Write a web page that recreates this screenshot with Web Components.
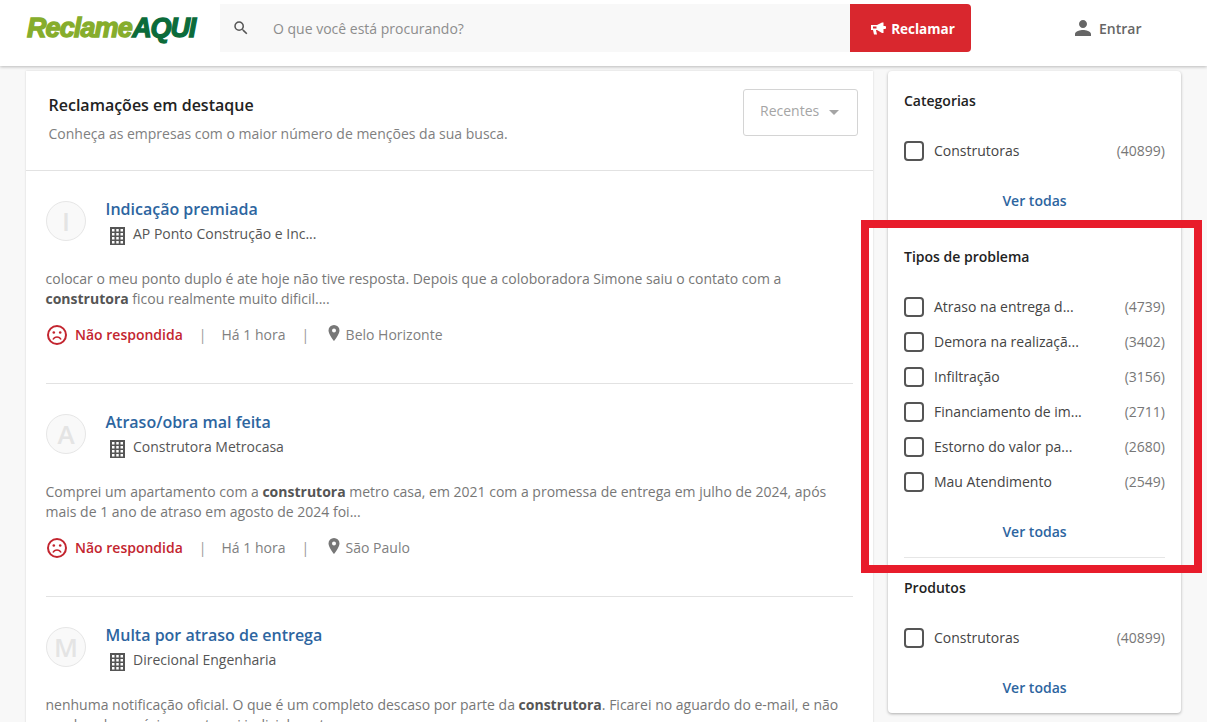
<!DOCTYPE html>
<html lang="pt-BR"><head><meta charset="utf-8"><title>Reclame AQUI</title>
<style>
html,body{margin:0;height:722px;overflow:hidden;background:#f8f8f8;font-family:"Open Sans",sans-serif;font-size:14px;color:#444}
.page{display:flex;gap:15px;padding:5px 26px 0;align-items:flex-start}
</style></head><body>
<template id="t-header"><style>
:host{display:flex;height:66px;background:#fff;box-shadow:0 1px 3px rgba(0,0,0,.25);position:relative;z-index:2;padding:0 26px;box-sizing:border-box}
.logo{width:194px;font:italic 700 27px "Liberation Sans",sans-serif;letter-spacing:-.9px;-webkit-text-stroke:1.300px currentColor;color:#86ad2c;line-height:56px;white-space:nowrap;padding-left:1px;box-sizing:border-box}
.logo b{color:#0b6b3a;font-weight:700;letter-spacing:-1.200px;margin-left:.5px}
.search{width:630px;height:48px;margin-top:4px;background:#f8f8f8;display:flex;align-items:center;box-sizing:border-box;padding-left:12px;color:#8d8d8d;font-size:14px}
.search svg{margin-right:23px}
.btn{width:121px;height:48px;margin-top:4px;background:#d9272e;border-radius:0 4px 4px 0;color:#fff;font-weight:700;font-size:13.5px;display:flex;align-items:center;justify-content:center;gap:4px;padding:2px 0 0 4px;box-sizing:border-box}
.in{margin-left:100px;display:flex;align-items:center;height:56px;gap:4px;color:#666;font-weight:600;font-size:14px}
</style>
<div class="logo">Reclame<b>AQUI</b></div>
<div class="search"><svg width="18" height="18" viewBox="0 0 24 24" fill="#555"><path d="M15.5 14h-.79l-.28-.27A6.47 6.47 0 0 0 16 9.5 6.5 6.5 0 1 0 9.5 16c1.61 0 3.09-.59 4.23-1.57l.27.28v.79l5 4.99L20.49 19l-4.99-5zm-6 0C7.01 14 5 11.99 5 9.5S7.01 5 9.5 5 14 7.01 14 9.5 11.99 14 9.5 14z"/></svg>O que você está procurando?</div>
<div class="btn"><svg width="17" height="14" viewBox="0 0 17 14" fill="#fff"><path d="M1 3h6l5-2.500h1.500V4H15a1 1 0 0 1 1 1v1a1 1 0 0 1-1 1h-1.500v4H12L7 8H6l1 4.500H4L3 8H1z"/><path d="M3 4.500h3.500v2H3z" fill="#d9272e"/></svg>Reclamar</div>
<div class="in"><svg width="24" height="24" viewBox="0 0 24 24" fill="#666"><path d="M12 12c2.210 0 4-1.790 4-4s-1.790-4-4-4-4 1.790-4 4 1.790 4 4 4zm0 2c-2.670 0-8 1.340-8 4v2h16v-2c0-2.660-5.330-4-8-4z"/></svg>Entrar</div>
</template>

<template id="t-feed"><style>
:host{display:block;width:847px;height:660px;background:#fff;box-shadow:0 0 2px rgba(0,0,0,.15);overflow:hidden;flex:none}
.top{display:flex;justify-content:space-between;height:99px;border-bottom:1px solid #e2e2e2;box-sizing:content-box;padding:0 15px 0 22.500px}
h2{margin:23px 0 0;font-size:16px;line-height:22px;font-weight:600;color:#222}
p{margin:8px 0 0;font-size:14px;line-height:20px;color:#808080}
.sel{width:115px;height:47px;margin-top:18px;box-sizing:border-box;border:1px solid #d4d4d4;border-radius:3px;display:flex;align-items:center;padding:0 0 4px 16px;gap:10px;color:#a5a5a5;font-size:14px}
.sel i{width:0;height:0;border:5px solid transparent;border-top-color:#a5a5a5;border-bottom:0;margin-top:4px}
</style>
<div class="top"><div><h2>Reclamações em destaque</h2><p>Conheça as empresas com o maior número de menções da sua busca.</p></div><div class="sel">Recentes<i></i></div></div>
<slot></slot>
</template>

<template id="t-item"><style>
:host{display:block;margin:0 20px;height:213px;box-sizing:border-box;padding-top:30px;border-bottom:1px solid #e2e2e2}
.head{display:flex;gap:19.500px;height:40px}
.av{width:38px;height:38px;border:1px solid #e6e6e6;border-radius:50%;background:#f9f9f9;display:flex;align-items:center;justify-content:center;font-size:26px;font-weight:600;color:#e4e4e4;flex:none}
.t{font-size:16px;line-height:20px;font-weight:600;color:#2d659f;margin-top:-2px}
.c{display:flex;align-items:center;gap:8px;margin:3px 0 0 4.500px;line-height:20px;font-size:14px;color:#555}
.c svg{margin-top:5px}
.d{margin:28px 0 0 -.500px;line-height:20px;font-size:14px;color:#777;height:40px}
.d ::slotted(b){color:#555}
.s{display:flex;align-items:center;margin-top:15px;height:20px;color:#808080;font-size:14px}
.sv{margin-top:2px}
.r{color:#c3252f;font-weight:600;margin-left:7px}
.sep{margin:0 15px 0 16px;color:#999}
.pin{margin:-3px 6px 0 3.500px}
</style>
<div class="head"><div class="av"><slot name="l"></slot></div><div><div class="t"><slot name="t"></slot></div>
<div class="c"><svg width="15" height="18" viewBox="0 0 15 18" fill="#555"><path fill-rule="evenodd" d="M0 0h15v18H0zM2 2v2.500h2.500V2zm4.250 0v2.500h2.500V2zM10.500 2v2.500H13V2zM2 6v2.500h2.500V6zm4.250 0v2.500h2.500V6zM10.500 6v2.500H13V6zM2 10v2.500h2.500V10zm4.250 0v2.500h2.500V10zM10.500 10v2.500H13V10zM2 14v2.500h2.500V14zm4.250 0v2.500h2.500V14zM10.500 14v2.500H13V14z"/></svg><slot name="c"></slot></div></div></div>
<div class="d"><slot></slot></div>
<div class="s"><svg class="sv" width="22" height="22" viewBox="0 0 22 22" fill="none" stroke="#c3252f" stroke-width="2"><circle cx="11" cy="11" r="9"/><path d="M7 15.500c1-2 2.500-2.500 4-2.500s3 .5 4 2.500" stroke-width="1.600"/><circle cx="7.800" cy="8.500" r="1.300" fill="#c3252f" stroke="none"/><circle cx="14.200" cy="8.500" r="1.300" fill="#c3252f" stroke="none"/></svg><span class="r">Não respondida</span><span class="sep">|</span>Há 1 hora<span class="sep">|</span><svg class="pin" width="12" height="16" viewBox="0 0 12 16" fill="#777"><path fill-rule="evenodd" d="M6 0a5.500 5.500 0 0 0-5.500 5.500C.5 9.500 6 16 6 16s5.500-6.500 5.500-10.500A5.500 5.500 0 0 0 6 0zm0 7.500a2 2 0 1 1 0-4 2 2 0 0 1 0 4z"/></svg><slot name="p"></slot></div>
</template>

<template id="t-side"><style>
:host{display:block;width:293px;height:642px;background:#fff;border-radius:4px;box-shadow:0 1px 3px rgba(0,0,0,.3);flex:none}
</style><slot></slot></template>

<template id="t-group"><style>
:host{display:block;margin:0 16px;padding:20px 0 15px;border-bottom:1px solid #e6e6e6}
:host([last]){border-bottom:0}
h3{margin:0 0 22px;font-size:14px;line-height:20px;font-weight:600;color:#222}
a{display:block;margin-top:23px;text-align:center;line-height:20px;font-size:14px;font-weight:600;color:#2d659f}
</style><h3><slot name="h"></slot></h3><slot></slot><a>Ver todas</a></template>

<template id="t-check"><style>
:host{display:flex;align-items:center;height:35px;font-size:14px;color:#444}
i{width:16px;height:16px;border:2px solid #555;border-radius:4px;margin-right:10px;flex:none}
span{flex:1;white-space:nowrap}
em{font-style:normal;color:#777}
</style><i></i><span><slot></slot></span><em><slot name="n"></slot></em></template>

<template id="t-mark"><style>
:host{position:absolute;left:861px;top:220px;width:341px;height:353px;box-sizing:border-box;border:8px solid #e81c2b;z-index:5;pointer-events:none}
</style></template>

<script>
for (const [n,t] of [['ra-header','t-header'],['ra-feed','t-feed'],['ra-item','t-item'],['ra-side','t-side'],['ra-group','t-group'],['ra-check','t-check'],['ra-mark','t-mark']]) {
  customElements.define(n, class extends HTMLElement {
    constructor(){super();this.attachShadow({mode:'open'}).appendChild(document.getElementById(t).content.cloneNode(true));}
  });
}
</script>

<ra-header></ra-header>
<div class="page">
<ra-feed>
<ra-item><span slot="l">I</span><span slot="t">Indicação premiada</span><span slot="c">AP Ponto Construção e Inc...</span>colocar o meu ponto duplo é ate hoje não tive resposta. Depois que a coloboradora Simone saiu o contato com a <b>construtora</b> ficou realmente muito dificil....<span slot="p">Belo Horizonte</span></ra-item>
<ra-item><span slot="l">A</span><span slot="t">Atraso/obra mal feita</span><span slot="c">Construtora Metrocasa</span>Comprei um apartamento com a <b>construtora</b> metro casa, em 2021 com a promessa de entrega em julho de 2024, após mais de 1 ano de atraso em agosto de 2024 foi...<span slot="p">São Paulo</span></ra-item>
<ra-item><span slot="l">M</span><span slot="t">Multa por atraso de entrega</span><span slot="c">Direcional Engenharia</span>nenhuma notificação oficial. O que é um completo descaso por parte da <b>construtora</b>. Ficarei no aguardo do e-mail, e não recebendo o mínimo, entrarei judicialmente...<span slot="p">Rio de Janeiro</span></ra-item>
</ra-feed>
<ra-side>
<ra-group><span slot="h">Categorias</span><ra-check>Construtoras<span slot="n">(40899)</span></ra-check></ra-group>
<ra-group><span slot="h">Tipos de problema</span>
<ra-check>Atraso na entrega d...<span slot="n">(4739)</span></ra-check>
<ra-check>Demora na realizaçã...<span slot="n">(3402)</span></ra-check>
<ra-check>Infiltração<span slot="n">(3156)</span></ra-check>
<ra-check>Financiamento de im...<span slot="n">(2711)</span></ra-check>
<ra-check>Estorno do valor pa...<span slot="n">(2680)</span></ra-check>
<ra-check>Mau Atendimento<span slot="n">(2549)</span></ra-check>
</ra-group>
<ra-group last><span slot="h">Produtos</span><ra-check>Construtoras<span slot="n">(40899)</span></ra-check></ra-group>
</ra-side>
</div>
<ra-mark></ra-mark>
</body></html>
